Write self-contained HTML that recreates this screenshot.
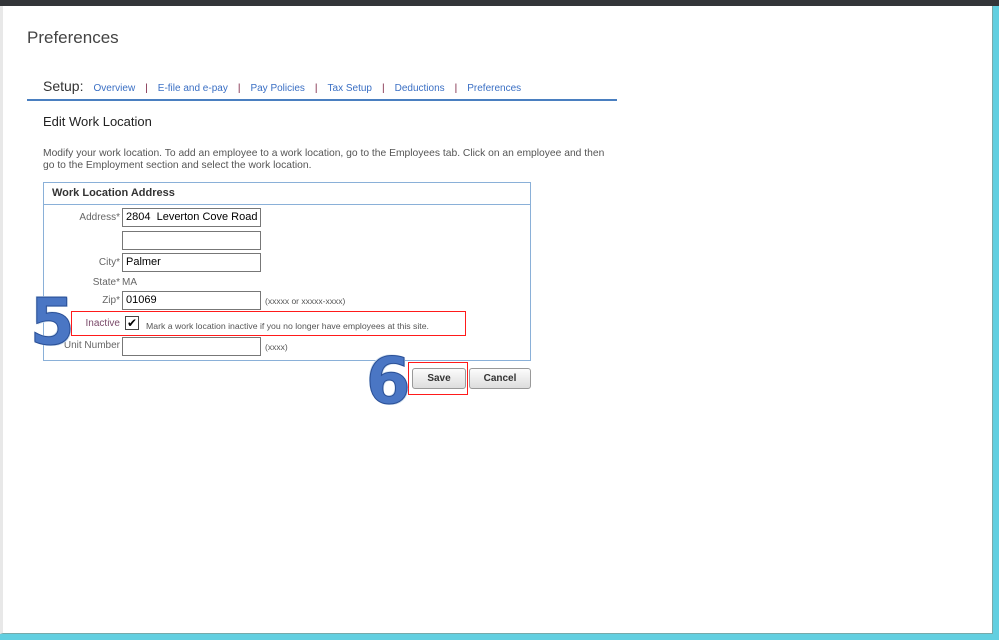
<!DOCTYPE html>
<html><head><style>
body{margin:0;width:999px;height:640px;position:relative;overflow:hidden;background:#62cfe0;font-family:"Liberation Sans",Arial,sans-serif}
.top{position:absolute;left:0;top:0;width:999px;height:6px;background:#333539}
.page{position:absolute;left:0;top:6px;width:993px;height:628px;background:#fff;border-left:3px solid #e8e8e8;box-sizing:border-box;border-right:1px solid #7aa;border-bottom:1px solid #7aa}
.a{position:absolute;white-space:nowrap}
.inp{position:absolute;left:122px;width:139px;height:19px;border:1px solid #777;box-sizing:border-box;background:#fff;font-size:11px;line-height:17px;padding-left:3px;color:#000}
.lbl{position:absolute;font-size:10px;color:#666;text-align:right;right:879px}
.nav a{color:#3a6fc4;text-decoration:none;font-size:10px}
.sep{color:#7a2040;font-size:10px;margin:0 10px}
.btn{position:absolute;top:368px;height:21px;border:1px solid #999;border-radius:3px;background:linear-gradient(#fcfcfc,#ddd);font-size:10px;font-weight:bold;color:#333;text-align:center;line-height:20px;box-sizing:border-box}
.big{position:absolute;font-family:"DejaVu Sans","Liberation Sans",sans-serif;font-weight:bold;font-size:64px;color:#4a76c4;-webkit-text-stroke:1px #2a4f96;text-shadow:1px 1px 0 #cde,-1px -1px 0 #cde;line-height:1}
.red{position:absolute;background:#ff1a1a;z-index:3}
</style></head><body>
<div class="top"></div>
<div class="page"></div>
<div class="a" style="left:27px;top:28px;font-size:17px;color:#444">Preferences</div>
<div class="a nav" style="left:43px;top:78px"><span style="font-size:14px;color:#333;margin-right:10px">Setup:</span><a>Overview</a><span class="sep">|</span><a>E-file and e-pay</a><span class="sep">|</span><a>Pay Policies</a><span class="sep">|</span><a>Tax Setup</a><span class="sep">|</span><a>Deductions</a><span class="sep">|</span><a>Preferences</a></div>
<div class="a" style="left:27px;top:99px;width:590px;height:2px;background:#4a7fc0"></div>
<div class="a" style="left:43px;top:114px;font-size:13px;color:#222">Edit Work Location</div>
<div class="a" style="left:43px;top:148px;font-size:10.3px;color:#555;line-height:12px">Modify your work location. To add an employee to a work location, go to the Employees tab. Click on an employee and then<br>go to the Employment section and select the work location.</div>
<div class="a" style="left:43px;top:182px;width:488px;height:179px;border:1px solid #8ab0d8;box-sizing:border-box"></div>
<div class="a" style="left:44px;top:204px;width:486px;height:1px;background:#8ab0d8"></div>
<div class="a" style="left:52px;top:187px;font-size:11px;font-weight:bold;color:#333">Work Location Address</div>
<div class="lbl" style="top:212px">Address*</div>
<div class="inp" style="top:208px">2804&nbsp; Leverton Cove Road</div>
<div class="inp" style="top:231px"></div>
<div class="lbl" style="top:257px">City*</div>
<div class="inp" style="top:253px">Palmer</div>
<div class="lbl" style="top:277px">State*</div>
<div class="a" style="left:122px;top:277px;font-size:10px;color:#666">MA</div>
<div class="lbl" style="top:295px">Zip*</div>
<div class="inp" style="top:291px">01069</div>
<div class="a" style="left:265px;top:296px;font-size:8.5px;color:#555">(xxxxx or xxxxx-xxxx)</div>
<div class="red" style="left:71px;top:311px;width:395px;height:1px"></div>
<div class="red" style="left:71px;top:335px;width:395px;height:1px"></div>
<div class="red" style="left:71px;top:311px;width:1px;height:25px"></div>
<div class="red" style="left:465px;top:311px;width:1px;height:25px"></div>
<div class="lbl" style="top:318px;color:#7a4a6a">Inactive</div>
<div class="a" style="left:125px;top:316px;width:12px;height:12px;border:1px solid #444;font-size:12px;line-height:12px;text-align:center">✔</div>
<div class="a" style="left:146px;top:321px;font-size:8.7px;color:#555">Mark a work location inactive if you no longer have employees at this site.</div>
<div class="lbl" style="top:340px">Unit Number</div>
<div class="inp" style="top:336px;top:337px"></div>
<div class="a" style="left:265px;top:342px;font-size:8.5px;color:#555">(xxxx)</div>
<div class="btn" style="left:412px;width:54px">Save</div>
<div class="btn" style="left:469px;width:62px">Cancel</div>
<div class="a" style="left:408px;top:362px;width:60px;height:33px;border:1px solid #ff1a1a;box-sizing:border-box"></div>
<div class="big" style="left:30px;top:291px">5</div>
<div class="big" style="left:366px;top:350px">6</div>
</body></html>
